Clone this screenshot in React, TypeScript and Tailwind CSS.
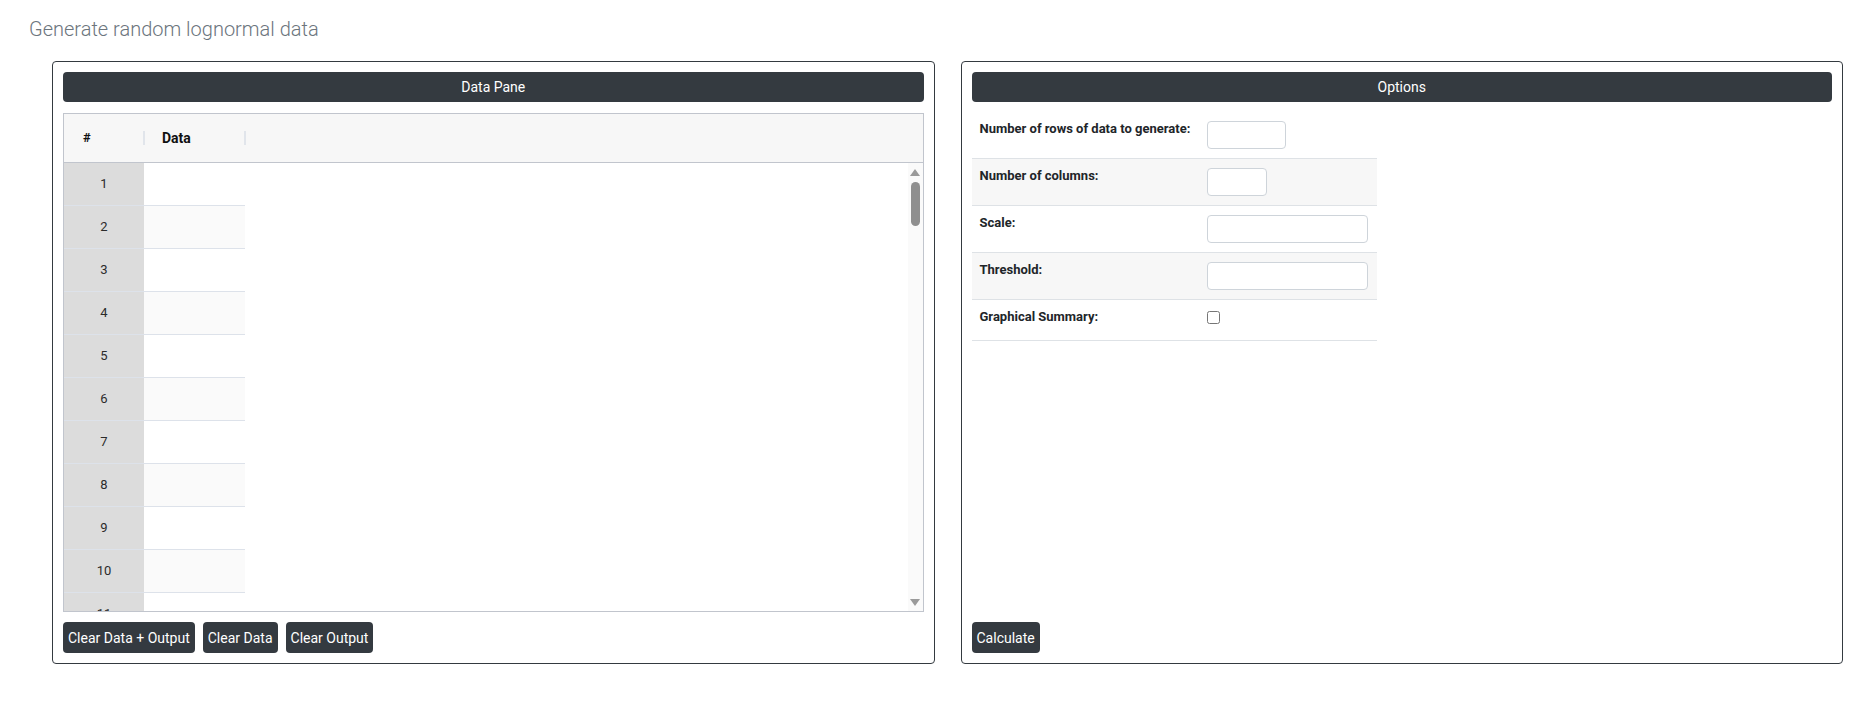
import React from "react";

const rows = Array.from({ length: 11 }, (_, i) => i + 1);

function Panel({ title, children }: { title: string; children: React.ReactNode }) {
  return (
    <div className="flex-1 h-[603px] border border-[#343a40] rounded-[4px] p-[10px] flex flex-col">
      <div className="h-[30px] shrink-0 bg-[#343a40] rounded-[4px] text-white text-[14px] flex items-center justify-center">
        {title}
      </div>
      {children}
    </div>
  );
}

function DarkButton({ label }: { label: string }) {
  return (
    <button className="h-[31px] px-[5px] bg-[#343a40] text-white text-[14px] rounded-[4px] leading-none">
      {label}
    </button>
  );
}

function DataGrid() {
  return (
    <div className="mt-[11px] h-[499px] border border-[#c1c5cd] flex flex-col overflow-hidden">
      {/* header */}
      <div className="h-[49px] shrink-0 bg-[#f7f7f7] border-b border-[#c1c5cd] flex items-center font-bold text-[#111]">
        <div className="w-[79px] pl-[19px] text-[13px]">#</div>
        <span className="w-[2px] h-[14px] bg-[#e1e5eb]" />
        <div className="w-[99px] pl-[17px] text-[14px]">Data</div>
        <span className="w-[2px] h-[14px] bg-[#e1e5eb]" />
      </div>
      {/* body */}
      <div className="flex-1 flex overflow-hidden">
        <div className="flex-1 overflow-hidden">
          {rows.map((n) => (
            <div key={n} className="flex h-[43px]">
              <div className="w-[80px] bg-[#dcdcdc] border-b border-[#dde2ea] flex items-center justify-center text-[13px] text-[#2b2b2b]">
                {n}
              </div>
              <div
                className={`w-[101px] border-b border-[#dde2ea] ${
                  n % 2 === 0 ? "bg-[#fafafa]" : "bg-white"
                }`}
              />
            </div>
          ))}
        </div>
        {/* scrollbar */}
        <div className="w-[15px] bg-[#fafafa] flex flex-col items-center">
          <svg className="mt-[6px]" width="10" height="7" viewBox="0 0 10 7">
            <path d="M5 0L10 7H0z" fill="#9a9a9a" />
          </svg>
          <div className="mt-[6px] w-[9px] h-[44px] rounded-full bg-[#8f8f8f]" />
          <div className="flex-1" />
          <svg className="mb-[5px]" width="10" height="7" viewBox="0 0 10 7">
            <path d="M0 0H10L5 7z" fill="#9a9a9a" />
          </svg>
        </div>
      </div>
    </div>
  );
}

function OptionRow({
  label,
  shaded,
  children,
  last,
}: {
  label: string;
  shaded?: boolean;
  children: React.ReactNode;
  last?: boolean;
}) {
  return (
    <div
      className={`flex border-b border-[#dee2e6] ${shaded ? "bg-[#f7f7f7]" : "bg-white"} ${
        last ? "h-[41px]" : ""
      }`}
    >
      <div className="w-[227px] px-[8px] py-[9px] text-[13px] leading-[15px] font-bold text-[#212529]">
        {label}
      </div>
      <div className="flex-1 px-[8px] py-[9px]">{children}</div>
    </div>
  );
}

function TextInput({ width }: { width: string }) {
  return (
    <input
      type="text"
      className={`${width} h-[28px] block border border-[#ced4da] rounded-[4px] bg-white outline-none`}
    />
  );
}

export default function App() {
  return (
    <div className="min-h-screen bg-white font-['Roboto','Liberation_Sans',sans-serif]">
      <h1 className="pl-[29px] pt-[18px] text-[20px] leading-[23px] font-light text-[#6c757d]">
        Generate random lognormal data
      </h1>
      <div className="mt-[20px] flex gap-[26px] pl-[52px] pr-[23px]">
        <Panel title="Data Pane">
          <DataGrid />
          <div className="mt-[10px] flex gap-[8px]">
            <DarkButton label="Clear Data + Output" />
            <DarkButton label="Clear Data" />
            <DarkButton label="Clear Output" />
          </div>
        </Panel>
        <Panel title="Options">
          <div className="mt-[10px] w-[405px]">
            <OptionRow label="Number of rows of data to generate:">
              <TextInput width="w-[79px]" />
            </OptionRow>
            <OptionRow label="Number of columns:" shaded>
              <TextInput width="w-[60px]" />
            </OptionRow>
            <OptionRow label="Scale:">
              <TextInput width="w-[161px]" />
            </OptionRow>
            <OptionRow label="Threshold:" shaded>
              <TextInput width="w-[161px]" />
            </OptionRow>
            <OptionRow label="Graphical Summary:" last>
              <input type="checkbox" className="mt-[2px] w-[13px] h-[13px] block" />
            </OptionRow>
          </div>
          <div className="flex-1" />
          <div>
            <DarkButton label="Calculate" />
          </div>
        </Panel>
      </div>
    </div>
  );
}
